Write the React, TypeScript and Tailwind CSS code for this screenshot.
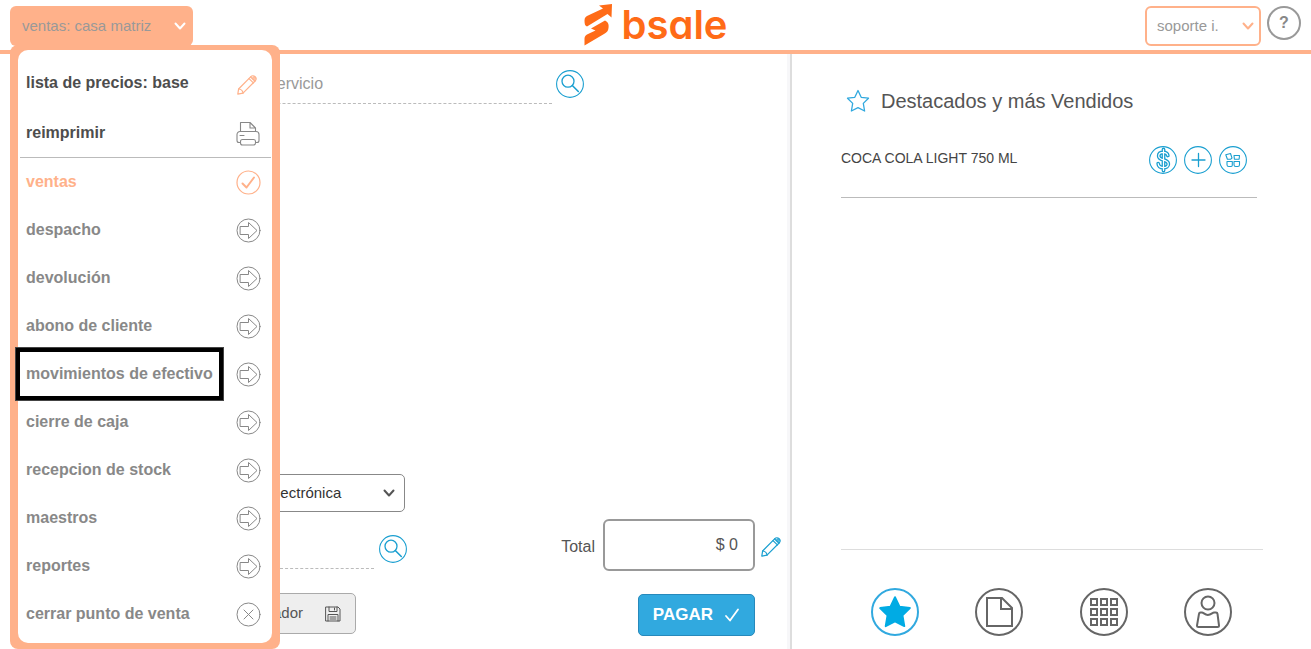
import React, { useState } from "react";

type IconProps = { className?: string };

const OUTLINE = {
  fill: "none",
  stroke: "currentColor",
  strokeLinecap: "round",
  strokeLinejoin: "round",
} as const;

function ChevronIcon({ className }: IconProps) {
  return (
    <svg viewBox="0 0 12 8" className={className} {...OUTLINE} strokeWidth="2" aria-hidden="true">
      <path d="M1.5 1.5 6 6.5l4.5-5" />
    </svg>
  );
}

function PencilIcon({ className }: IconProps) {
  return (
    <svg viewBox="0 0 20 20" className={className} {...OUTLINE} strokeWidth="1.2" aria-hidden="true">
      <path d="M.8 19.2 1.6 14 13.600 1.800c1.400-1.400 3.200-1.400 4.500-.1s1.300 3 0 4.300L6 18.200z" />
      <path d="M1.600 14c2.200.2 4.200 2 4.400 4.200M12 3.600l4.400 4.300M13.600 2l4.400 4.200" />
      <circle cx="17" cy="3" r="1.200" />
    </svg>
  );
}

function PrinterIcon({ className }: IconProps) {
  return (
    <svg viewBox="0 0 24 25" className={className} {...OUTLINE} strokeWidth="1.1" aria-hidden="true">
      <path d="M4.500 10.500V1.500h9.500l5.500 5.500v3.500M14 1.500V7h5.500" />
      <path d="M4 21.500H3a2 2 0 0 1-2-2V13.500a3 3 0 0 1 3-3h16a3 3 0 0 1 3 3v6a2 2 0 0 1-2 2h-1" />
      <path d="M6.500 18.500h11a2 2 0 0 1 2 2v1.500a2 2 0 0 1-2 2h-11a2 2 0 0 1-2-2v-1.500a2 2 0 0 1 2-2zM4 14.500h4" />
    </svg>
  );
}

function CheckCircleIcon({ className }: IconProps) {
  return (
    <svg viewBox="0 0 25 25" className={className} {...OUTLINE} strokeWidth="1.2" aria-hidden="true">
      <circle cx="12.5" cy="12.5" r="11.5" />
      <path d="m6.5 13.5 4 4L18 7.500" strokeWidth="2" />
    </svg>
  );
}

function ArrowCircleIcon({ className }: IconProps) {
  return (
    <svg viewBox="0 0 25 25" className={className} {...OUTLINE} strokeWidth="1" aria-hidden="true">
      <circle cx="12.5" cy="12.5" r="11.5" />
      <path d="M4.5 8.500h8V4.500l8.500 8-8.500 8v-4h-8z" strokeLinejoin="miter" />
    </svg>
  );
}

function CloseCircleIcon({ className }: IconProps) {
  return (
    <svg viewBox="0 0 25 25" className={className} {...OUTLINE} strokeWidth="1" aria-hidden="true">
      <circle cx="12.5" cy="12.5" r="11.5" />
      <path d="m8 8 9 9M17 8l-9 9" />
    </svg>
  );
}

function SearchIcon({ className }: IconProps) {
  return (
    <svg viewBox="0 0 28 28" className={className} {...OUTLINE} strokeWidth="1.1" aria-hidden="true">
      <circle cx="14" cy="14" r="13.4" />
      <circle cx="12" cy="11.2" r="6" strokeWidth="1.3" />
      <path d="m16.300 15.500 6 6" strokeWidth="1.6" />
    </svg>
  );
}

function SaveIcon({ className }: IconProps) {
  return (
    <svg viewBox="0 0 16 16" className={className} {...OUTLINE} strokeWidth="1" aria-hidden="true">
      <path d="M1 1h12l2 2v12H1zM4 1v4.500h8V1M9.500 2v2M3 15V8.500h10V15M5 11h6M5 13h6" />
    </svg>
  );
}

function StarIcon({ className, filled }: IconProps & { filled?: boolean }) {
  return (
    <svg
      viewBox="0 0 24 24"
      className={className}
      fill={filled ? "currentColor" : "none"}
      stroke="currentColor"
      strokeWidth="1.3"
      strokeLinejoin="round"
      aria-hidden="true"
    >
      <path d="m12 1.500 3.200 6.800 7.300.9-5.200 5.200 1.300 7.600L12 18.700 5.400 22l1.300-7.600L1.500 9.200l7.300-.9z" />
    </svg>
  );
}

const DOLLAR =
  "M14.5 3.5v21M18.8 9.500c-.4-2-2-3.100-4.500-3.100-2.700 0-4.600 1.300-4.600 3.500 0 5 9.600 3 9.600 8 0 2.300-2 3.700-4.900 3.700-3 0-5-1.500-5.200-4";

function PriceIcon({ className }: IconProps) {
  return (
    <svg viewBox="0 0 28 28" className={className} {...OUTLINE} aria-hidden="true">
      <circle cx="14" cy="14" r="13.4" strokeWidth="1.1" />
      <path d={DOLLAR} strokeWidth="3.8" />
      <path d={DOLLAR} stroke="#fff" strokeWidth="1.2" />
    </svg>
  );
}

function AddIcon({ className }: IconProps) {
  return (
    <svg viewBox="0 0 28 28" className={className} {...OUTLINE} strokeWidth="1.1" aria-hidden="true">
      <circle cx="14" cy="14" r="13.4" />
      <path d="M14.5 7.500v13M8 14h13" strokeWidth="1.3" />
    </svg>
  );
}

function VariantsIcon({ className }: IconProps) {
  return (
    <svg viewBox="0 0 28 28" className={className} {...OUTLINE} strokeWidth="1.1" aria-hidden="true">
      <circle cx="14" cy="14" r="13.4" />
      <path d="m6.800 8.800 4.700-1.300 1.500 4.500-1.500 1.300H8.400zM15 9.500h5.500l-.4 3.800h-4.700zM8 15.500h5.300v3.800a1.200 1.200 0 0 1-1.200 1.200H9.800A1.800 1.800 0 0 1 8 18.700zM15 15.500h5.500v3.200a1.800 1.800 0 0 1-1.800 1.800h-1.900a1.800 1.800 0 0 1-1.800-1.800z" />
    </svg>
  );
}

function DocumentIcon({ className }: IconProps) {
  return (
    <svg viewBox="0 0 48 48" className={className} fill="none" stroke="currentColor" strokeWidth="2" aria-hidden="true">
      <path d="M12 10h15l10 10v18H12zM26 10v11h11" />
    </svg>
  );
}

function GridIcon({ className }: IconProps) {
  const cells = [11, 21, 31];
  return (
    <svg viewBox="0 0 48 48" className={className} fill="none" stroke="currentColor" strokeWidth="2" aria-hidden="true">
      {cells.map((y) => cells.map((x) => <rect key={`${x}-${y}`} x={x} y={y} width="6" height="6" />))}
    </svg>
  );
}

function CustomerIcon({ className }: IconProps) {
  return (
    <svg viewBox="0 0 48 48" className={className} {...OUTLINE} strokeWidth="2" aria-hidden="true">
      <circle cx="24" cy="15" r="6.5" />
      <path d="M18 24.500h-1.500a1.500 1.500 0 0 0-1.500 1.300L13 37.500a1.500 1.500 0 0 0 1.500 1.500h19a1.500 1.500 0 0 0 1.500-1.500l-1.500-11.700a1.500 1.500 0 0 0-1.500-1.300h-2c-1.500 0-3 2.500-6.200 2.500-3 0-4.300-2.500-5.800-2.500z" />
    </svg>
  );
}

function Logo() {
  return (
    <a href="#" className="flex items-center gap-2 text-[#ff6b17]">
      <svg viewBox="0 0 30 42" className="h-[42px] w-[30px]" fill="currentColor" aria-hidden="true">
        <path d="M16 1.500 29 0l-.5 13.500-4-3.500L4 22.500C2 22 1.500 20 1.500 16.500c0-3 1.500-4 3.500-5l15-7z" />
        <path d="M22 16.500c3.500 1.500 4 4.500 3.500 7.500-.3 3-1.500 4.500-4.500 6L1.500 41.500v-7c0-2.500 1.500-3.500 3.500-4.500l7.500-3.500L8 24.500z" />
      </svg>
      <span className="font-[Inter,sans-serif] text-[40px] leading-10 font-semibold [font-feature-settings:'cv11']">
        bsale
      </span>
    </a>
  );
}

const MODULES = [
  "despacho",
  "devolución",
  "abono de cliente",
  "movimientos de efectivo",
  "cierre de caja",
  "recepcion de stock",
  "maestros",
  "reportes",
];

const ITEM = "flex w-full items-center justify-between pr-[11px] pl-2 text-left";

function SalesMenu() {
  return (
    <nav className="absolute top-[45px] left-[10px] z-10 w-[270px] rounded-lg bg-[#ffb18a] px-2 pt-[5px] pb-[6px] text-base font-bold text-[#888]">
      <ul className="rounded-[10px] bg-white pt-2 pb-[5px]">
        <li>
          <button className={`${ITEM} h-[50px] text-[#4d4d4d]`}>
            lista de precios: base
            <PencilIcon className="mt-[3px] mr-1 size-5 text-[#ffb18a]" />
          </button>
        </li>
        <li className="mr-px ml-[2px] border-b border-[#bbb]">
          <button className="flex h-[49px] w-full items-center justify-between pr-[11px] pl-[6px] text-left text-[#4d4d4d]">
            reimprimir
            <PrinterIcon className="mt-[2px] h-[25px] w-6 text-[#888]" />
          </button>
        </li>
        <li>
          <button className={`${ITEM} h-12 text-[#ffb18a]`} aria-current="page">
            ventas
            <CheckCircleIcon className="size-[25px]" />
          </button>
        </li>
        {MODULES.map((name) => (
          <li key={name} className="relative">
            <button className={`${ITEM} h-12`}>
              {name}
              <ArrowCircleIcon className="size-[25px]" />
            </button>
            {name === "movimientos de efectivo" && (
              <span className="pointer-events-none absolute -top-[2px] -left-[2px] h-[52px] w-[207px] border-4 border-black outline outline-[#444]" />
            )}
          </li>
        ))}
        <li>
          <button className={`${ITEM} h-12`}>
            cerrar punto de venta
            <CloseCircleIcon className="size-[25px]" />
          </button>
        </li>
      </ul>
    </nav>
  );
}

function Header({ menuOpen, onToggleMenu }: { menuOpen: boolean; onToggleMenu: () => void }) {
  return (
    <header className="grid h-[54px] grid-cols-[1fr_auto_1fr] items-start border-b-4 border-[#ffb18a] px-[10px]">
      <button
        onClick={onToggleMenu}
        aria-expanded={menuOpen}
        className="mt-[6px] flex h-10 w-[183px] items-center justify-between rounded-md bg-[#ffb18a] pr-[7px] pl-3 text-[15px] text-[#999]"
      >
        ventas: casa matriz
        <ChevronIcon className="h-2 w-3 text-white" />
      </button>
      <div className="pt-1">
        <Logo />
      </div>
      <div className="flex items-start justify-end gap-[6px] pt-[6px]">
        <div className="grid items-center">
          <select
            aria-label="Usuario"
            className="col-start-1 row-start-1 h-10 w-[116px] appearance-none rounded-md border-2 border-[#ffb18a] bg-white pr-6 pl-[10px] text-[15px] text-[#999]"
          >
            <option>soporte i.</option>
          </select>
          <ChevronIcon className="pointer-events-none col-start-1 row-start-1 mr-[7px] h-2 w-3 justify-self-end text-[#ffb18a]" />
        </div>
        <button className="size-[34px] rounded-full border-2 border-[#999] text-base font-bold text-[#888]">?</button>
      </div>
    </header>
  );
}

function SalePanel() {
  return (
    <section className="flex flex-col justify-between border-r-2 border-[#ddd] pr-[9px] shadow-[inset_-3px_0_0_#f7f7f9]">
      <div className="flex items-start gap-1 pt-4">
        <input
          aria-label="Producto o servicio"
          placeholder="Producto o servicio"
          className="ml-[187px] h-[34px] w-[365px] border-b border-dashed border-[#bbb] pb-[6px] text-base text-[#666] outline-none placeholder:text-[#999]"
        />
        <button aria-label="Buscar producto" className="text-[#1a9fd0]">
          <SearchIcon className="size-7" />
        </button>
      </div>

      <div className="flex flex-col pb-[13px]">
        <div className="ml-[205px] grid w-[200px] items-center">
          <select
            aria-label="Documento"
            className="col-start-1 row-start-1 h-[38px] appearance-none rounded-[5px] border border-[#888] bg-white pr-8 pl-4 text-[15px] text-[#333]"
          >
            <option>Boleta electrónica</option>
          </select>
          <ChevronIcon className="pointer-events-none col-start-1 row-start-1 mr-[10px] h-2 w-3 justify-self-end text-[#555]" />
        </div>

        <div className="mt-[7px] flex items-center justify-between">
          <div className="flex items-center gap-[5px] pt-2">
            <input
              aria-label="Cliente"
              className="ml-[184px] h-10 w-[190px] border-b border-dashed border-[#bbb] outline-none"
            />
            <button aria-label="Buscar cliente" className="text-[#1a9fd0]">
              <SearchIcon className="size-7" />
            </button>
          </div>
          <div className="flex items-center text-[#555]">
            <label htmlFor="total" className="mr-2 pt-1">Total</label>
            <input
              id="total"
              defaultValue="$ 0"
              className="mr-[6px] h-[52px] w-[152px] rounded-md border-2 border-[#999] pr-[15px] text-right"
            />
            <button aria-label="Editar total" className="pt-1 text-[#1a9fd0]">
              <PencilIcon className="size-5" />
            </button>
          </div>
        </div>

        <div className="mt-[22px] flex items-start justify-between pr-[26px]">
          <button className="ml-[180px] flex h-[41px] w-[176px] items-center justify-end gap-[22px] rounded-[5px] border border-[#aaa] bg-[#eee] pr-[14px] text-[15px] text-[#555]">
            Borrador
            <SaveIcon className="size-4" />
          </button>
          <button className="mt-px flex h-[42px] items-center gap-[11px] rounded-[5px] border border-[#2789bb] bg-[#31a9df] px-[14px] text-[17px] font-bold text-white">
            PAGAR
            <svg viewBox="0 0 16 16" className="size-4" {...OUTLINE} strokeWidth="1.8" aria-hidden="true">
              <path d="m2 9 4 4.500L14 2.500" />
            </svg>
          </button>
        </div>
      </div>
    </section>
  );
}

const TAB = "flex size-12 items-center justify-center rounded-full border-2";

function FeaturedPanel() {
  return (
    <section className="flex flex-col justify-between pr-12 pl-[49px]">
      <div>
        <h2 className="mt-[33px] flex items-center gap-[11px] pl-[5px] text-xl leading-7 text-[#555]">
          <StarIcon className="size-6 text-[#31a9df]" />
          Destacados y más Vendidos
        </h2>
        <div className="mt-[31px] mr-[6px] flex items-start justify-between border-b border-[#bbb] pr-[10px] pb-[23px] text-sm text-[#444]">
          <span className="pt-[2px]">COCA COLA LIGHT 750 ML</span>
          <div className="flex gap-[7px] text-[#1a9fd0]">
            <button aria-label="Precio"><PriceIcon className="size-7" /></button>
            <button aria-label="Agregar"><AddIcon className="size-7" /></button>
            <button aria-label="Variantes"><VariantsIcon className="size-7" /></button>
          </div>
        </div>
      </div>

      <div className="flex justify-between border-t border-[#ddd] pt-[38px] pr-[31px] pb-[13px] pl-[30px] text-[#666]">
        <button aria-label="Destacados" className={`${TAB} border-[#31a9df] text-[#00abe4]`}>
          <StarIcon className="size-[34px] shrink-0" filled />
        </button>
        <button aria-label="Documentos" className={`${TAB} border-[#666]`}>
          <DocumentIcon className="size-12 shrink-0" />
        </button>
        <button aria-label="Categorías" className={`${TAB} border-[#666]`}>
          <GridIcon className="size-12 shrink-0" />
        </button>
        <button aria-label="Clientes" className={`${TAB} border-[#666]`}>
          <CustomerIcon className="size-12 shrink-0" />
        </button>
      </div>
    </section>
  );
}

export default function App() {
  const [menuOpen, setMenuOpen] = useState(true);

  return (
    <div className="relative flex min-h-screen flex-col bg-white font-['Liberation_Sans',Arial,sans-serif]">
      <Header menuOpen={menuOpen} onToggleMenu={() => setMenuOpen(!menuOpen)} />
      {menuOpen && <SalesMenu />}
      <main className="grid flex-1 grid-cols-[792fr_519fr]">
        <SalePanel />
        <FeaturedPanel />
      </main>
    </div>
  );
}
